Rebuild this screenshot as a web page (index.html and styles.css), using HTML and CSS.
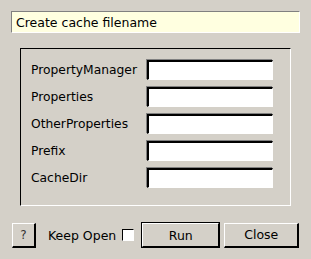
FILE: index.html
```html
<!DOCTYPE html>
<html lang="en">
<head>
  <meta charset="UTF-8" />
  <title>Create cache filename</title>
  <link rel="stylesheet" href="styles.css">
</head>
<body>
  <div class="dialog">
    <div class="title">Create cache filename</div>

    <div class="frame">
      <div class="row">
        <label>PropertyManager</label>
        <input class="entry" />
      </div>
      <div class="row">
        <label>Properties</label>
        <input class="entry" />
      </div>
      <div class="row">
        <label>OtherProperties</label>
        <input class="entry" />
      </div>
      <div class="row">
        <label>Prefix</label>
        <input class="entry" />
      </div>
      <div class="row">
        <label>CacheDir</label>
        <input class="entry" />
      </div>
    </div>

    <div class="buttons">
      <button class="btn help">?</button>
      <span class="keep">Keep Open</span>
      <span class="check"></span>
      <button class="btn run">Run</button>
      <button class="btn close">Close</button>
    </div>
  </div>
</body>
</html>
```

FILE: styles.css
```css
body {
  margin: 0;
  background-color: #d4d0c8;
  font-family: 'DejaVu Sans', sans-serif;
  font-size: 12.3px;
  color: #000;
}
.dialog {
  width: 311px;
  height: 259px;
  padding-top: 11px;
  box-sizing: border-box;
}
.title {
  margin-left: 11px;
  width: 289px;
  height: 22px;
  box-sizing: border-box;
  padding-left: 4px;
  font-size: 12.5px;
  line-height: 21px;
  background-color: #ffffe0;
  border-top: 1px solid #808080;
  border-left: 1px solid #808080;
  border-bottom: 1px solid #fff;
  border-right: 1px solid #fff;
}
.frame {
  margin: 15px 0 0 20px;
  width: 271px;
  height: 158px;
  box-sizing: border-box;
  padding: 11px 17px 0 10px;
  border-top: 1px solid #000;
  border-left: 1px solid #000;
  border-bottom: 1px solid #fff;
  border-right: 1px solid #fff;
  display: flex;
  flex-direction: column;
  gap: 7px;
}
.row {
  display: flex;
  align-items: center;
  justify-content: space-between;
  height: 20px;
}
.entry {
  width: 126px;
  height: 20px;
  box-sizing: border-box;
  margin: 0;
  padding: 0 2px;
  background: #fff;
  border-top: 2px solid #000;
  border-left: 2px solid #000;
  border-bottom: 1px solid #fff;
  border-right: 1px solid #fff;
  box-shadow: -1px -1px 0 #808080, 1px 1px 0 #d4d0c8;
  outline: none;
}
.buttons {
  margin: 16px 0 0 12px;
  display: flex;
  align-items: center;
  height: 26px;
}
.btn {
  height: 25px;
  box-sizing: border-box;
  margin: 0;
  padding: 0;
  font-family: 'DejaVu Sans', sans-serif;
  font-size: 12.5px;
  color: #000;
  background-color: #d4d0c8;
  border-top: 1px solid #fff;
  border-left: 1px solid #fff;
  border-bottom: 2px solid #000;
  border-right: 2px solid #000;
}
.help { width: 24px; color: #333; font-size: 12px; }
.keep { margin-left: 12px; font-size: 12.5px; }
.check {
  width: 12px;
  height: 12px;
  margin-left: 6px;
  box-sizing: border-box;
  background: #fff;
  border-top: 1px solid #000;
  border-left: 1px solid #000;
  border-bottom: 1px solid #fff;
  border-right: 1px solid #fff;
}
.run {
  width: 79px;
  height: 26px;
  margin-left: 7px;
  outline: 1px solid #000;
  outline-offset: -1px;
  border-top: 2px solid #fff;
  border-left: 2px solid #fff;
}
.close { width: 75px; margin-left: 4px; }
```
